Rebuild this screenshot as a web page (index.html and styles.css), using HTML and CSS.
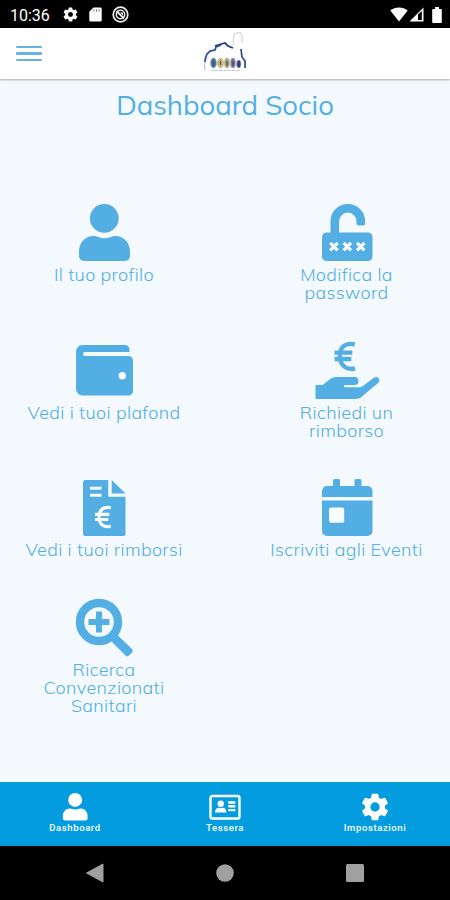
FILE: index.html
```
<!DOCTYPE html>
<html lang="it">
<head>
    <meta charset="UTF-8">
    <meta name="viewport" content="width=device-width, initial-scale=1.0">
    <title>Dashboard Socio</title>
    <link rel="stylesheet" href="styles.css">
</head>
<body>
    <div class="app">
        <div class="status-bar">
            <div class="status-left">
                <span class="clock">10:36</span>
                <svg class="status-gear" width="17" height="17" viewBox="0 0 24 24"><use href="#gear"/></svg>
                <svg width="13" height="15" viewBox="0 0 13 15"><path d="M4.5 .5H11.5a1.2 1.2 0 0 1 1.2 1.2V13.3a1.2 1.2 0 0 1-1.2 1.2H1.5A1.2 1.2 0 0 1 .3 13.3V4.8z" fill="#fff"/><path d="M5 2.3v2.4M7.5 2.3v2.4M10 2.3v2.4" stroke="#777" stroke-width="1"/></svg>
                <svg width="17" height="17" viewBox="0 0 17 17" fill="none" stroke="#eee"><circle cx="8.5" cy="8.5" r="7.3" stroke-width="1.7"/><circle cx="8.5" cy="8.5" r="4.2" stroke-width="1.5"/><path d="M4.5 5l7.5 7.5" stroke-width="1.8"/><path d="M8 6.5h3v3z" fill="#eee" stroke="none"/></svg>
            </div>
            <div class="status-right">
                <svg width="18" height="15" viewBox="0 0 18 15"><path d="M.3 3.6C5.2-.7 12.8-.7 17.7 3.6L9 14.6z" fill="#fff"/></svg>
                <svg width="15" height="15" viewBox="0 0 15 15"><path d="M14.5 .5v14H.5z" fill="#fff"/><path d="M9 7.5l3.8-3.6v9H9z" fill="#000"/></svg>
                <svg class="battery" width="10" height="16" viewBox="0 0 10 16"><path d="M3 0h4v2h1.8a1 1 0 0 1 1 1v12a1 1 0 0 1-1 1H1.2a1 1 0 0 1-1-1V3a1 1 0 0 1 1-1H3z" fill="#fff"/></svg>
            </div>
        </div>

        <div class="header">
            <button class="menu-button" aria-label="Menu"><span></span><span></span><span></span></button>
            <svg class="logo" width="44" height="44" viewBox="0 0 44 44" fill="none">
                <path d="M2 30c0-3 1-6 2-8l3-3 5-1 1-3 5-2" stroke="#34559b" stroke-width="1.800"/>
                <path d="M2 38c-.500-3-.500-5 0-8" stroke="#a9b6d2" stroke-width="1"/>
                <path d="M12 14l3-1 7-2 3 3 5 2" stroke="#203c84" stroke-width="1.800"/>
                <path d="M30 13l1-11 6-2 2 4v7" stroke="#ccd0d8" stroke-width="1"/>
                <path d="M38 17l1 8 3 4v7" stroke="#3b4f95" stroke-width="1.800"/>
                <g stroke="#a8b2c4" stroke-width=".7">
                    <ellipse cx="10.500" cy="31" rx="3" ry="5" fill="#47739b"/>
                    <ellipse cx="17.500" cy="31" rx="3" ry="5" fill="#e0b865"/>
                    <ellipse cx="24" cy="31" rx="2.500" ry="5" fill="#b0ae5a"/>
                    <ellipse cx="30" cy="31" rx="2.500" ry="5" fill="#85719c"/>
                    <ellipse cx="35.800" cy="32" rx="2.200" ry="4" fill="#36406e"/>
                </g>
                <path d="M10.500 29v5M17.500 29v4M24 29v5M30 29v5" stroke="#3a4a6c" stroke-width="1.200"/>
                <path d="M8 38.500h29" stroke="#b9c2d2" stroke-width="1.200" stroke-dasharray="2 .6"/>
            </svg>
        </div>

        <div class="content">
            <h1>Dashboard Socio</h1>
            <div class="menu-grid">
                <a class="menu-item" href="#">
                    <svg class="icon" viewBox="0 0 66 58"><use href="#user"/></svg>
                    <span class="label">Il tuo profilo</span>
                </a>
                <a class="menu-item" href="#">
                    <svg class="icon" viewBox="0 0 66 58">
                        <path d="M20.800 31V17.300a13 13 0 0 1 26 0V17.500" fill="none" stroke="currentColor" stroke-width="8.600"/>
                        <path d="M42.500 17H51.100V19.500a2 2 0 0 1-2 2H44.500a2 2 0 0 1-2-2z"/>
                        <rect x="8" y="28.500" width="50.500" height="28.500" rx="4.500"/>
                        <path d="M16.200 38.900l7.400 7.400m0-7.400l-7.400 7.400M29.600 38.900l7.400 7.400m0-7.400l-7.400 7.400M43 38.900l7.400 7.400m0-7.400l-7.400 7.400" class="cut-line" stroke-width="3.200"/>
                    </svg>
                    <span class="label">Modifica la<br>password</span>
                </a>
                <a class="menu-item" href="#">
                    <svg class="icon" viewBox="0 0 66 58">
                        <path d="M11.500 3H54a4.500 4.500 0 0 1 4.500 4.500V10H14a2 2 0 0 0 0 4H57.500a4.500 4.500 0 0 1 4.500 4.500V49a4.500 4.500 0 0 1-4.500 4.500H11.500A6.500 6.500 0 0 1 5 47V9.500A6.500 6.500 0 0 1 11.500 3z"/>
                        <circle cx="51.300" cy="33.800" r="3.700" class="cut"/>
                    </svg>
                    <span class="label">Vedi i tuoi plafond</span>
                </a>
                <a class="menu-item" href="#">
                    <svg class="icon" viewBox="0 0 66 58">
                        <path d="M40.800 2.500C31 0 25.800 5.500 25.800 13.800S31 28.500 41 26.500M20.500 10.600H38.300M20.500 17H37.300" fill="none" stroke="currentColor" stroke-width="4.400"/>
                        <path d="M1.500 43H8.500L15.500 37.500C17.700 35.800 20 35 23 35H40.500a4 4 0 0 1 0 8H31a1 1 0 0 0 0 2.200H45c1.500 0 2.600-.4 3.800-1.300L59.500 36c4-2.800 8.200 1.700 4.500 5L48 54.500c-2 1.800-4 2.500-6.500 2.500H1.500z"/>
                    </svg>
                    <span class="label">Richiedi un<br>rimborso</span>
                </a>
                <a class="menu-item" href="#">
                    <svg class="icon" viewBox="0 0 66 58">
                        <path d="M14.500 1H37.200V17.700H54.500V55a2 2 0 0 1-2 2H14.500a2.500 2.500 0 0 1-2.500-2.500V3.500A2.500 2.500 0 0 1 14.500 1zM40.700 1L54.500 14.500H40.700z"/>
                        <path d="M19 9.200H30.500M19 16.200H30.500" class="cut-line" stroke-width="3"/>
                        <path d="M39.800 28.800C32 27 28 31.500 28 38s4 11 11.800 9.300M24 35.300H38.300M24 40.500H37.300" class="cut-line" stroke-width="3.200"/>
                    </svg>
                    <span class="label">Vedi i tuoi rimborsi</span>
                </a>
                <a class="menu-item" href="#">
                    <svg class="icon" viewBox="0 0 66 58">
                        <path d="M8 18V12a5 5 0 0 1 5-5H19V1.500a1.500 1.500 0 0 1 1.500-1.500H24.500A1.500 1.500 0 0 1 26 1.500V7H40.500V1.500A1.500 1.500 0 0 1 42 0H46a1.500 1.500 0 0 1 1.500 1.500V7H53.500a5 5 0 0 1 5 5V18zM8 21.500H58.500V52a5 5 0 0 1-5 5H13a5 5 0 0 1-5-5z"/>
                        <rect x="15" y="28.500" width="15.200" height="15.200" rx="2" class="cut"/>
                    </svg>
                    <span class="label">Iscriviti agli Eventi</span>
                </a>
                <a class="menu-item" href="#">
                    <svg class="icon" viewBox="0 0 66 58">
                        <circle cx="28" cy="23" r="19" fill="none" stroke="currentColor" stroke-width="8.400"/>
                        <path d="M28 12.500v21M17.500 23h21" fill="none" stroke="currentColor" stroke-width="6"/>
                        <path d="M39 36.500L43.500 34 47 36.500 61 50a2.500 2.500 0 0 1 0 3.500L58 56.500a2.500 2.500 0 0 1-3.500 0L41 43z"/>
                    </svg>
                    <span class="label">Ricerca<br>Convenzionati<br>Sanitari</span>
                </a>
            </div>
        </div>

        <div class="tab-bar">
            <a class="tab" href="#">
                <svg width="32" height="28" viewBox="0 0 66 58"><use href="#user"/></svg>
                <span>Dashboard</span>
            </a>
            <a class="tab" href="#">
                <svg width="32" height="28" viewBox="0 0 32 28">
                    <rect x="1.500" y="3" width="29" height="22.500" rx="1.800" fill="none" stroke="#fff" stroke-width="2.400"/>
                    <circle cx="11.700" cy="10.700" r="3.200"/>
                    <path d="M6 19.500c0-3 1.500-4.700 4-4.700 1 .5 2.400.5 3.400 0 2.500 0 4 1.700 4 4.700z"/>
                    <path d="M19.300 9.500h7M19.300 13.300h7M19.300 17.100h7" stroke="#fff" stroke-width="2.400"/>
                </svg>
                <span>Tessera</span>
            </a>
            <a class="tab" href="#">
                <svg width="34" height="32" viewBox="0 0 24 22.500"><use href="#gear" y="-.75"/></svg>
                <span>Impostazioni</span>
            </a>
        </div>

        <div class="system-bar">
            <svg width="20" height="20" viewBox="0 0 20 20"><path d="M18 1v18L1.500 10z" stroke="#a0a0a0" stroke-linejoin="round"/></svg>
            <svg width="20" height="20" viewBox="0 0 20 20"><circle cx="10" cy="10" r="8.800"/></svg>
            <svg width="20" height="20" viewBox="0 0 20 20"><rect x="1" y="1" width="18" height="18" rx="1.500"/></svg>
        </div>
    </div>

    <!-- shared icons -->
    <svg class="symbols" width="0" height="0">
        <g id="user">
            <circle cx="33.300" cy="14.400" r="14.400"/>
            <path d="M22.500 32c2 0 3.500.4 5.500 1.200 3.500 1.400 7.500 1.400 11 0 2-.8 3.500-1.200 5.500-1.200C53 32 59 39 59 47.500V52a5 5 0 0 1-5 5H13a5 5 0 0 1-5-5V47.500C8 39 14 32 22.500 32z"/>
        </g>
        <path id="gear" d="M19.430 12.980c.04-.32.07-.64.07-.98s-.03-.66-.07-.98l2.110-1.650c.19-.15.24-.42.12-.64l-2-3.460c-.12-.22-.39-.3-.61-.22l-2.490 1c-.52-.4-1.080-.73-1.690-.98l-.38-2.650A.49.490 0 0 0 14 2h-4c-.25 0-.46.18-.49.42l-.38 2.650c-.61.25-1.170.59-1.690.98l-2.490-1c-.23-.09-.49 0-.61.22l-2 3.460c-.13.22-.07.49.12.64l2.110 1.650c-.04.32-.07.65-.07.98s.03.66.07.98l-2.110 1.650c-.19.15-.24.42-.12.64l2 3.460c.12.22.39.3.61.22l2.490-1c.52.4 1.080.73 1.690.98l.38 2.650c.03.24.24.42.49.42h4c.25 0 .46-.18.49-.42l.38-2.650c.61-.25 1.170-.59 1.690-.98l2.490 1c.23.09.49 0 .61-.22l2-3.460c.12-.22.07-.49-.12-.64zM12 15.500A3.500 3.500 0 1 1 12 8.500a3.500 3.500 0 0 1 0 7z"/>
    </svg>
</body>
</html>
```

FILE: styles.css
```
* {
    box-sizing: border-box;
    margin: 0;
    padding: 0;
}
body {
    background-color: #F4F9FD;
    font-family: Muli, Mulish, Lato, sans-serif;
}
.app {
    display: flex;
    flex-direction: column;
    width: 450px;
    height: 900px;
    overflow: hidden;
}
a {
    text-decoration: none;
}
.symbols {
    display: block;
}
.status-bar {
    display: flex;
    justify-content: space-between;
    align-items: center;
    flex: none;
    height: 28px;
    padding: 1px 8px 0 10px;
    background-color: #000;
}
.status-left,
.status-right {
    display: flex;
    align-items: center;
}
.status-left {
    gap: 10px;
}
.status-right {
    gap: 1px;
}
.battery {
    margin-left: 7px;
}
.clock {
    width: 42px;
    padding-top: 1px;
    font-family: Roboto, sans-serif;
    font-size: 16px;
    color: #FFF;
}
.status-gear {
    fill: #FFF;
}
.header {
    display: grid;
    grid-template-columns: 1fr auto 1fr;
    align-items: center;
    flex: none;
    height: 51px;
    padding: 0 16px;
    background-color: #FFF;
    box-shadow: 0 1px 2px rgba(0, 0, 0, 0.3);
    z-index: 1;
}
.menu-button {
    display: flex;
    flex-direction: column;
    gap: 4px;
    width: 26px;
    border: none;
    background: none;
}
.menu-button span {
    width: 26px;
    height: 2.5px;
    border-radius: 1px;
    background-color: #69B3DF;
}
.content {
    flex: 1;
    padding-top: 9px;
    color: #52AEE3;
}
h1 {
    height: 34px;
    line-height: 34px;
    font-size: 27.5px;
    font-weight: 400;
    text-align: center;
    white-space: nowrap;
}
.menu-grid {
    display: grid;
    grid-template-columns: 208px 207px;
    column-gap: 35px;
    row-gap: 39.5px;
    margin-top: 82px;
}
.menu-item {
    display: flex;
    flex-direction: column;
    align-items: center;
    gap: 4px;
    color: #52AEE3;
}
.icon {
    width: 66px;
    height: 58px;
    fill: currentColor;
    overflow: visible;
}
.cut {
    fill: #F8FCFF;
}
.cut-line {
    fill: none;
    stroke: #F8FCFF;
}
.label {
    font-size: 18px;
    font-weight: 300;
    line-height: 18px;
    text-align: center;
    white-space: nowrap;
    letter-spacing: 0.35px;
    font-variant-ligatures: none;
}
.tab-bar {
    display: grid;
    grid-template-columns: repeat(3, 1fr);
    flex: none;
    height: 64px;
    background-color: #039CDF;
}
.tab {
    display: flex;
    flex-direction: column;
    align-items: center;
    padding-top: 10px;
    font-family: Roboto, sans-serif;
    font-size: 9.5px;
    font-weight: 500;
    line-height: 12px;
    letter-spacing: 0.6px;
    color: #FFF;
    fill: #FFF;
}
.tab svg {
    height: 30px;
}
.system-bar {
    display: flex;
    justify-content: center;
    align-items: center;
    gap: 110px;
    flex: none;
    height: 54px;
    background-color: #000;
    fill: #A0A0A0;
}
```
